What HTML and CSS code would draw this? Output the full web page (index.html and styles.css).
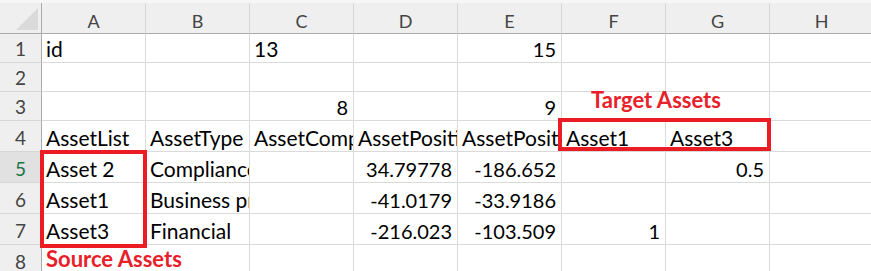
FILE: index.html
```html
<!DOCTYPE html>
<html>
<head>
<meta charset="utf-8">
<link rel="stylesheet" href="styles.css">
</head>
<body>
<div class="topbar"></div>
<div class="sheet">
  <div class="corner"><span class="tri"></span></div>
  <div class="ch">A</div><div class="ch">B</div><div class="ch">C</div><div class="ch">D</div><div class="ch">E</div><div class="ch">F</div><div class="ch">G</div><div class="ch">H</div>

  <div class="rh">1</div>
  <div class="c">id</div><div class="c"></div><div class="c">13</div><div class="c"></div><div class="c num">15</div><div class="c"></div><div class="c"></div><div class="c"></div>

  <div class="rh">2</div>
  <div class="c"></div><div class="c"></div><div class="c"></div><div class="c"></div><div class="c"></div><div class="c"></div><div class="c"></div><div class="c"></div>

  <div class="rh">3</div>
  <div class="c"></div><div class="c"></div><div class="c num">8</div><div class="c"></div><div class="c num">9</div><div class="c note note-target">Target Assets</div><div class="c"></div>

  <div class="rh">4</div>
  <div class="c">AssetList</div><div class="c">AssetType</div><div class="c">AssetComponent</div><div class="c">AssetPosition</div><div class="c">AssetPosition</div><div class="c">Asset1</div><div class="c">Asset3</div><div class="c"></div>

  <div class="rh sel">5</div>
  <div class="c">Asset 2</div><div class="c">Compliance</div><div class="c"></div><div class="c num">34.79778</div><div class="c num">-186.652</div><div class="c"></div><div class="c num">0.5</div><div class="c"></div>

  <div class="rh">6</div>
  <div class="c">Asset1</div><div class="c">Business process</div><div class="c"></div><div class="c num">-41.0179</div><div class="c num">-33.9186</div><div class="c"></div><div class="c"></div><div class="c"></div>

  <div class="rh">7</div>
  <div class="c">Asset3</div><div class="c">Financial</div><div class="c"></div><div class="c num">-216.023</div><div class="c num">-103.509</div><div class="c num">1</div><div class="c"></div><div class="c"></div>

  <div class="rh">8</div>
  <div class="c note note-source">Source Assets</div><div class="c"></div><div class="c"></div><div class="c"></div><div class="c"></div><div class="c"></div><div class="c"></div>

  <div class="range range-source"></div>
  <div class="range range-target"></div>
</div>
</body>
</html>
```

FILE: styles.css
```css
html, body {
  margin: 0;
  padding: 0;
  background: #ffffff;
  overflow: hidden;
}

body {
  width: 871px;
  height: 271px;
  font-family: "Lato", "Liberation Sans", sans-serif;
}

.topbar {
  height: 3px;
  background: #f7f5f5;
}

.sheet {
  position: relative;
  display: grid;
  grid-template-columns: 42px repeat(8, 104px);
  grid-template-rows: 31px 29px 29px 29px 31px 31px 31px 31px 31px;
  width: 874px;
}

.corner {
  background: #efefef;
  border-right: 1px solid #ababab;
  border-bottom: 1px solid #ababab;
  box-sizing: border-box;
  display: flex;
  justify-content: flex-end;
  align-items: flex-end;
  padding: 0 3px 3px 0;
}

.tri {
  width: 0;
  height: 0;
  border-left: 22px solid transparent;
  border-bottom: 22px solid #dadada;
}

.ch {
  background: #efefef;
  border-right: 1px solid #d6d6d6;
  border-bottom: 1px solid #ababab;
  box-sizing: border-box;
  display: flex;
  justify-content: center;
  align-items: flex-end;
  padding-bottom: 3px;
  font-size: 18px;
  line-height: 1;
  color: #444444;
}

.rh {
  background: #efefef;
  border-right: 1px solid #ababab;
  border-bottom: 1px solid #d6d6d6;
  box-sizing: border-box;
  display: flex;
  justify-content: center;
  align-items: flex-end;
  padding-bottom: 4px;
  font-size: 19px;
  line-height: 1;
  color: #444444;
}

.rh.sel {
  background: #e1e1e1;
  color: #217346;
}

.c {
  border-right: 1px solid #dadada;
  border-bottom: 1px solid #dadada;
  box-sizing: border-box;
  display: flex;
  align-items: flex-end;
  padding: 0 0 3px 4px;
  font-size: 21px;
  line-height: 1;
  color: #000000;
  white-space: nowrap;
  overflow: hidden;
}

.c.num {
  justify-content: flex-end;
  padding: 0 5px 3px 0;
  font-size: 20px;
}

.note {
  font-weight: 700;
  color: #e8202a;
  font-size: 22px;
  background: #ffffff;
  overflow: visible;
}

.note-target {
  grid-column: span 2;
  padding: 0 0 9px 29px;
}

.note-source {
  grid-column: span 2;
  align-items: flex-start;
  padding: 3px 0 0 4px;
}

.range {
  position: absolute;
  border: 4px solid #ec1c24;
  box-sizing: border-box;
  pointer-events: none;
  z-index: 2;
}

.range-source {
  grid-column: 2 / 3;
  grid-row: 6 / 9;
  top: -2px;
  right: -1px;
  bottom: -3px;
  left: -2px;
}

.range-target {
  grid-column: 7 / 9;
  grid-row: 5 / 6;
  top: -3px;
  right: -1px;
  bottom: 1px;
  left: -4px;
}
```
